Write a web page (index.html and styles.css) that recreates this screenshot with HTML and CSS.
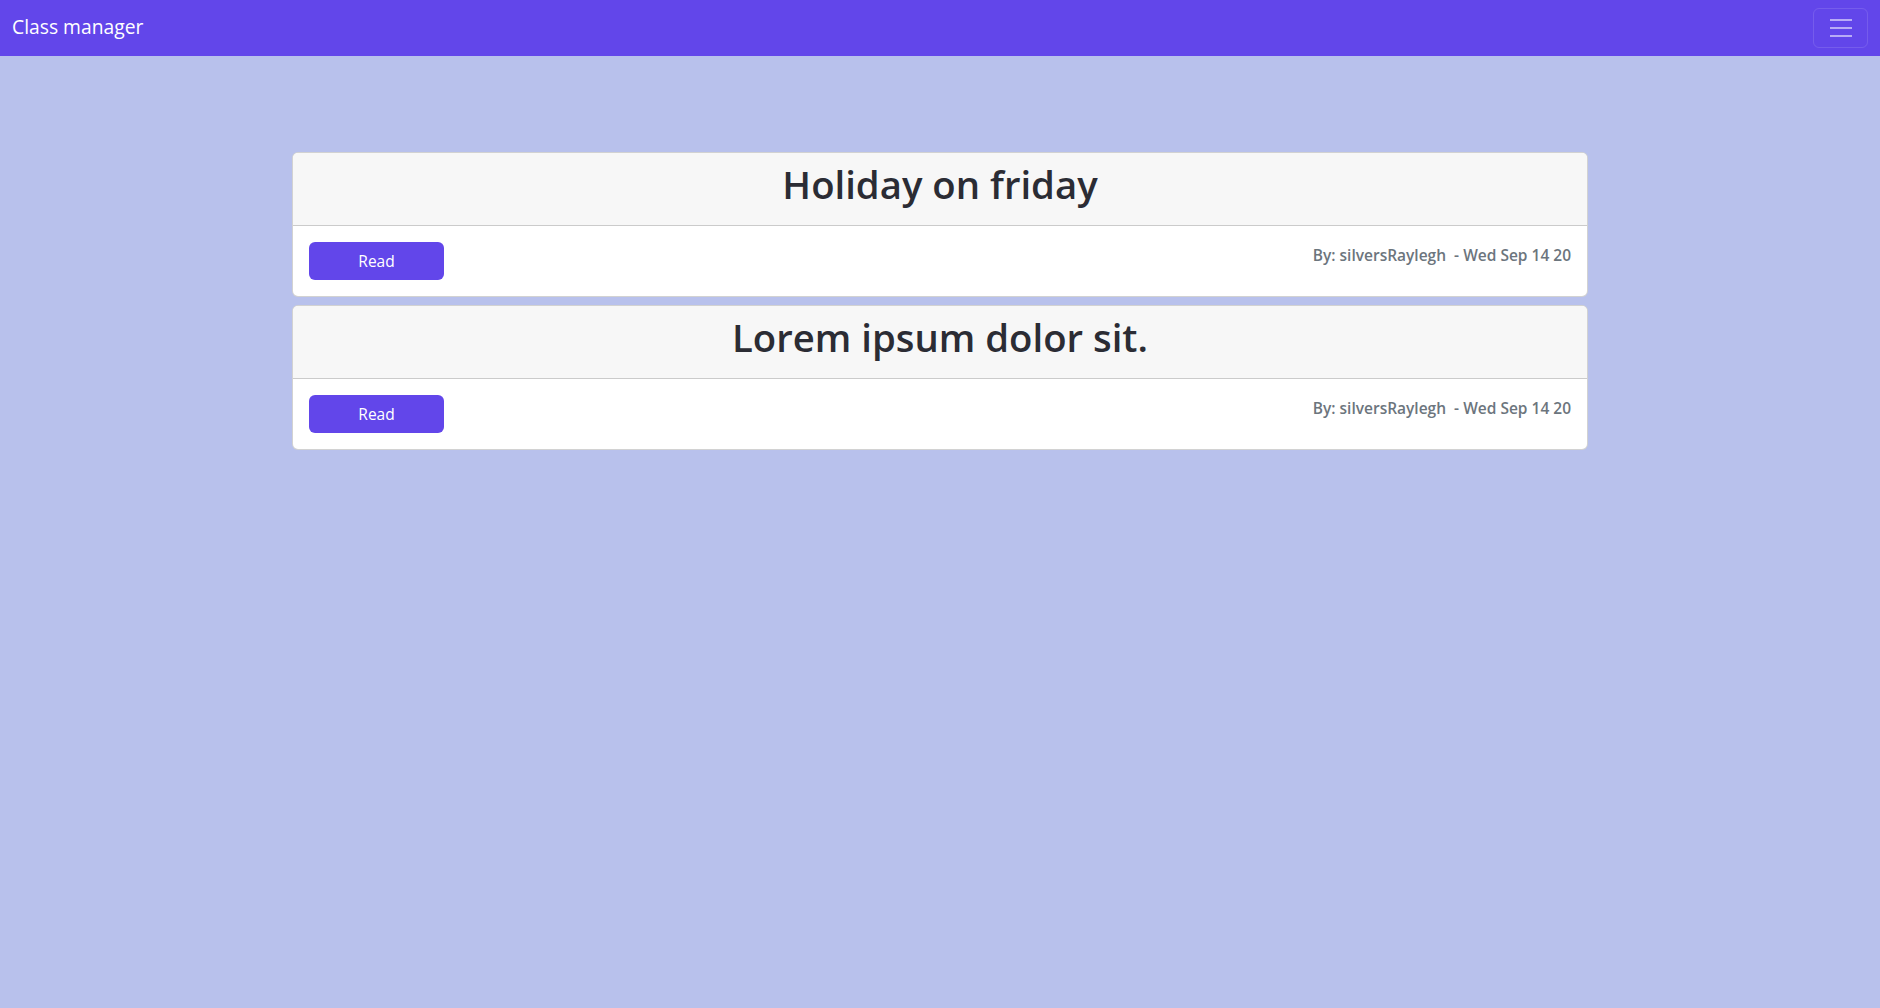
FILE: index.html
```html
<!DOCTYPE html>
<html lang="en">
<head>
<meta charset="utf-8">
<title>Class manager</title>
<link rel="stylesheet" href="styles.css">
</head>
<body>
<nav class="navbar">
  <a class="brand" href="#">Class manager</a>
  <button class="toggler" type="button" aria-label="Toggle navigation">
    <svg width="30" height="30" viewBox="0 0 30 30" aria-hidden="true">
      <path d="M4 7h22M4 15h22M4 23h22" stroke="rgba(255,255,255,0.55)" stroke-width="2" stroke-linecap="butt" fill="none"/>
    </svg>
  </button>
</nav>
<main class="container">
  <article class="card">
    <header class="card-header"><h1 class="card-title">Holiday on friday</h1></header>
    <div class="card-body">
      <button class="btn-read" type="button">Read</button>
      <p class="meta">By: silversRaylegh&nbsp; - Wed Sep 14 20</p>
    </div>
  </article>
  <article class="card">
    <header class="card-header"><h1 class="card-title">Lorem ipsum dolor sit.</h1></header>
    <div class="card-body">
      <button class="btn-read" type="button">Read</button>
      <p class="meta">By: silversRaylegh&nbsp; - Wed Sep 14 20</p>
    </div>
  </article>
</main>
</body>
</html>
```
FILE: styles.css
```css
* { box-sizing: border-box; }
html, body { margin: 0; padding: 0; }
body {
  background: #b8c1ec;
  font-family: "Open Sans", "Noto Sans", sans-serif;
  color: #212529;
  min-height: 1008px;
}
.navbar {
  background: #6246ea;
  height: 56px;
  padding: 8px 12px;
  display: flex;
  align-items: center;
  justify-content: space-between;
}
.brand {
  color: #fff;
  text-decoration: none;
  font-size: 19.3px;
  line-height: 30px;
  margin-top: -2px;
}
.toggler {
  width: 55px;
  height: 40px;
  padding: 0;
  background: transparent;
  border: 1px solid rgba(255,255,255,0.12);
  border-radius: 6px;
  display: flex;
  align-items: center;
  justify-content: center;
}
.toggler svg { display: block; }
.container {
  max-width: 1320px;
  margin: 0 auto;
  padding: 96px 12px 0;
  display: flex;
  flex-direction: column;
  gap: 8px;
}
.card {
  background: #fff;
  border: 1px solid rgba(0,0,0,0.175);
  border-radius: 6px;
  overflow: hidden;
}
.card-header {
  background: #f7f7f7;
  border-bottom: 1px solid rgba(0,0,0,0.175);
  padding: 7px 16px 9px;
  height: 73px;
}
.card-title {
  margin: 0;
  text-align: center;
  font-size: 38.3px;
  font-weight: 600;
  line-height: 48px;
  color: #2b2c34;
}
.card-body {
  padding: 16px;
  height: 70px;
  display: flex;
  justify-content: space-between;
  align-items: flex-start;
}
.btn-read {
  width: 135px;
  height: 38px;
  background: #6246ea;
  color: #fff;
  border: none;
  border-radius: 6px;
  font-family: inherit;
  font-size: 15.5px;
  cursor: pointer;
}
.meta {
  margin: 0;
  color: #6c757d;
  font-size: 15.5px;
  font-weight: 600;
  line-height: 24px;
  padding-top: 1px;
}
```
